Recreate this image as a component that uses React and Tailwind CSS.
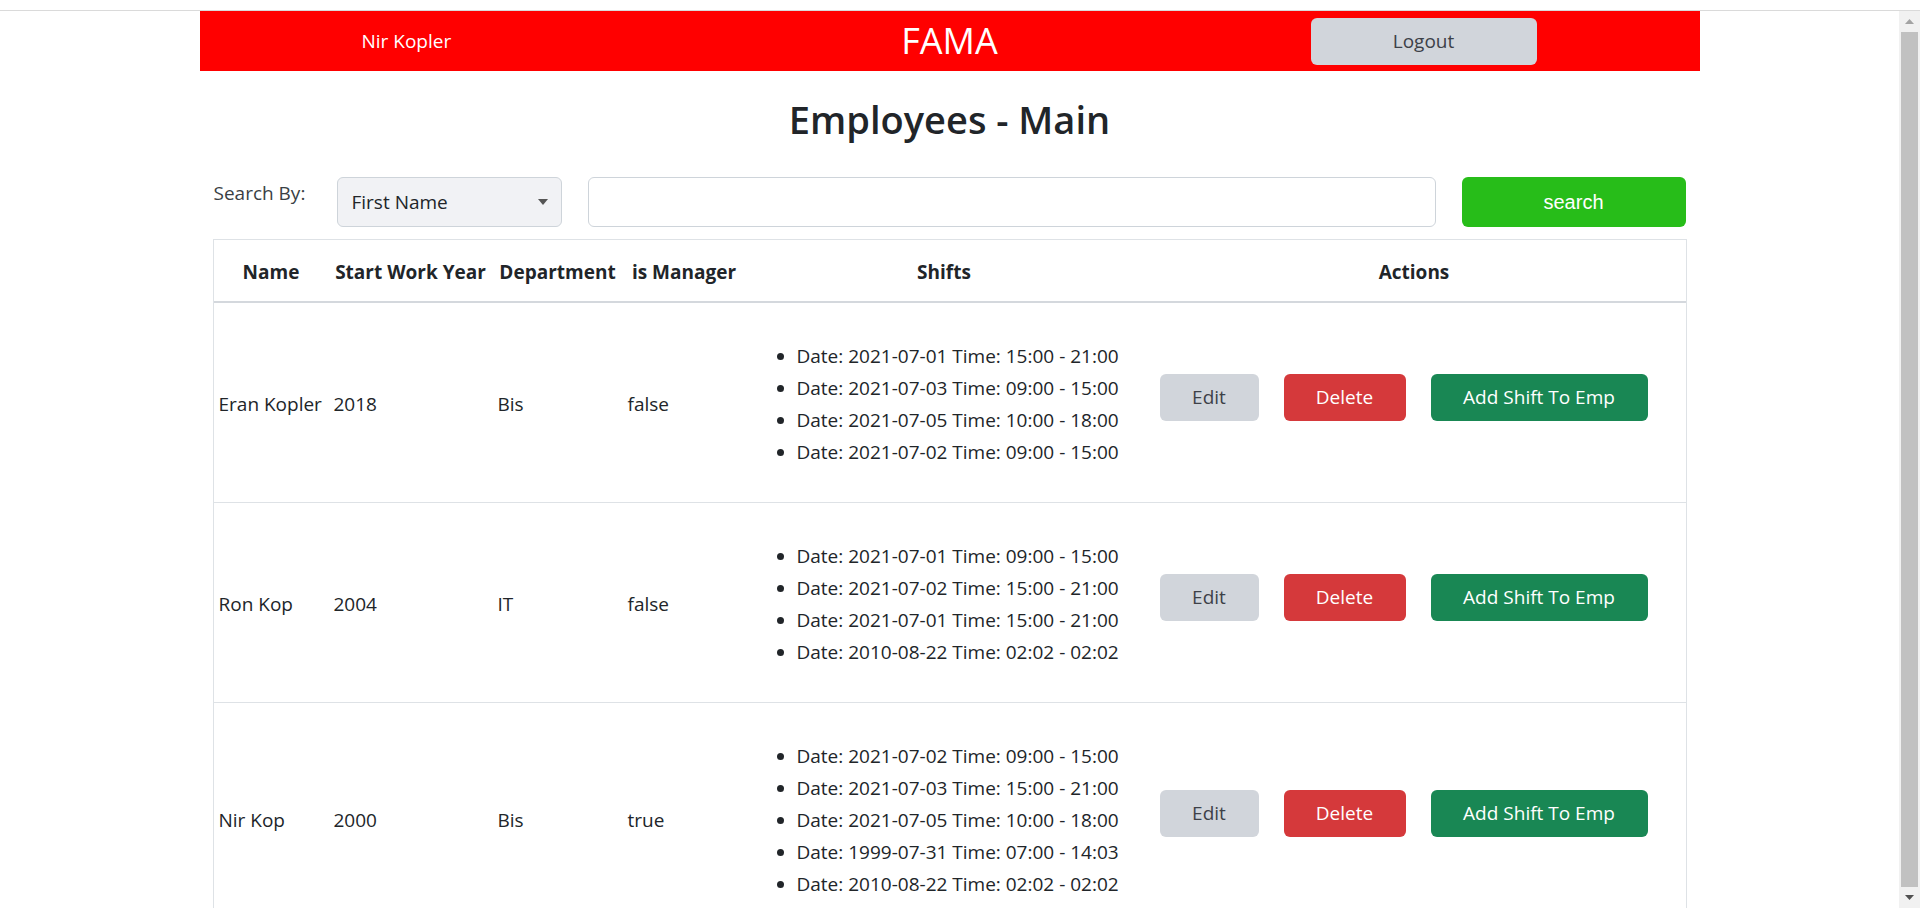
const employees = [
  {
    name: "Eran Kopler",
    year: 2018,
    dept: "Bis",
    manager: "false",
    shifts: [
      ["2021-07-01", "15:00", "21:00"],
      ["2021-07-03", "09:00", "15:00"],
      ["2021-07-05", "10:00", "18:00"],
      ["2021-07-02", "09:00", "15:00"],
    ],
  },
  {
    name: "Ron Kop",
    year: 2004,
    dept: "IT",
    manager: "false",
    shifts: [
      ["2021-07-01", "09:00", "15:00"],
      ["2021-07-02", "15:00", "21:00"],
      ["2021-07-01", "15:00", "21:00"],
      ["2010-08-22", "02:02", "02:02"],
    ],
  },
  {
    name: "Nir Kop",
    year: 2000,
    dept: "Bis",
    manager: "true",
    shifts: [
      ["2021-07-02", "09:00", "15:00"],
      ["2021-07-03", "15:00", "21:00"],
      ["2021-07-05", "10:00", "18:00"],
      ["1999-07-31", "07:00", "14:03"],
      ["2010-08-22", "02:02", "02:02"],
    ],
  },
];

const cols = "grid grid-cols-[115px_164px_130px_123px_397px_543px]";

function Header() {
  return (
    <div className="grid grid-cols-3 h-[60px] bg-[#ff0000] items-center text-white">
      <div className="pl-[162px] text-[19px]">Nir Kopler</div>
      <div className="text-center text-[36px] leading-none">FAMA</div>
      <div className="pl-[111px]">
        <button className="w-[226px] h-[47px] rounded-[6px] bg-[#d1d5db] text-[#3d4148] text-[19px]">
          Logout
        </button>
      </div>
    </div>
  );
}

function SearchBar() {
  return (
    <div className="flex items-start mt-[34px]">
      <div className="w-[124px] pl-[1px] leading-[32px] text-[19px] text-[#3a3f45]">Search By:</div>
      <div className="w-[225px] h-[50px] rounded-[6px] border border-[#ced4da] bg-[#f1f2f5] flex items-center justify-between pl-[14px] pr-[13px]">
        <span className="text-[19px] text-[#212529] pt-[1px]">First Name</span>
        <svg width="10" height="6" viewBox="0 0 10 6">
          <path d="M0 0h10L5 6z" fill="#555" />
        </svg>
      </div>
      <div className="ml-[26px] w-[848px] h-[50px] rounded-[6px] border border-[#ced4da] bg-white" />
      <button
        className="ml-[26px] w-[224px] h-[50px] rounded-[6px] bg-[#27bd19] text-white text-[20px]"
        style={{ fontFamily: '"Liberation Sans", Arial, sans-serif' }}
      >
        search
      </button>
    </div>
  );
}

function EmployeeRow({ emp }) {
  return (
    <div className={`${cols} border-b border-[#dee2e6] text-[19px] text-[#212529]`}>
      <div className="flex items-center pl-[5px] pt-[4px]">{emp.name}</div>
      <div className="flex items-center pl-[5px] pt-[4px]">{emp.year}</div>
      <div className="flex items-center pl-[5px] pt-[4px]">{emp.dept}</div>
      <div className="flex items-center pl-[5px] pt-[4px]">{emp.manager}</div>
      <ul className="list-disc pl-[51px] pt-[37px] pb-[34px]">
        {emp.shifts.map((s, i) => (
          <li key={i} className="leading-[32px] whitespace-nowrap">
            Date: {s[0]} Time: {s[1]} - {s[2]}
          </li>
        ))}
      </ul>
      <div className="flex items-center gap-[25px] pl-[17px] pb-[10px]">
        <button className="w-[99px] h-[47px] rounded-[6px] bg-[#d1d5db] text-[#3d4148]">Edit</button>
        <button className="w-[122px] h-[47px] rounded-[6px] bg-[#d5393b] text-white">Delete</button>
        <button className="w-[217px] h-[47px] rounded-[6px] bg-[#198754] text-white">Add Shift To Emp</button>
      </div>
    </div>
  );
}

function EmployeesTable() {
  return (
    <div className="mt-[12px] border border-[#dee2e6]">
      <div className={`${cols} h-[63px] pt-[4px] border-b-2 border-[#d4d8dd] items-center text-center font-bold text-[19px] text-[#212529]`}>
        <div>Name</div>
        <div>Start Work Year</div>
        <div>Department</div>
        <div>is Manager</div>
        <div>Shifts</div>
        <div>Actions</div>
      </div>
      {employees.map((emp) => (
        <EmployeeRow key={emp.name} emp={emp} />
      ))}
    </div>
  );
}

function Scrollbar() {
  return (
    <div className="w-[21px] shrink-0 bg-[#f1f1f1] flex flex-col items-center">
      <div className="h-[21px] flex items-center justify-center">
        <svg width="9" height="5" viewBox="0 0 9 5">
          <path d="M0 5L4.5 0 9 5z" fill="#a3a3a3" />
        </svg>
      </div>
      <div className="w-[17px] flex-1 bg-[#c1c1c1]" />
      <div className="h-[21px] flex items-center justify-center">
        <svg width="9" height="5" viewBox="0 0 9 5">
          <path d="M0 0h9L4.5 5z" fill="#505050" />
        </svg>
      </div>
    </div>
  );
}

export default function App() {
  return (
    <div
      className="h-screen flex flex-col overflow-hidden bg-white"
      style={{ fontFamily: '"Open Sans", "Noto Sans", sans-serif' }}
    >
      <div className="h-[11px] shrink-0 border-b border-[#dadada] bg-white" />
      <div className="flex flex-1 min-h-0">
        <div className="flex-1 overflow-hidden">
          <div className="w-[1500px] mx-auto">
            <Header />
            <h2 className="mt-[24px] text-center text-[38px] font-semibold leading-[48px] text-[#212529]">
              Employees - Main
            </h2>
            <div className="px-[13px]">
              <SearchBar />
              <EmployeesTable />
            </div>
          </div>
        </div>
        <Scrollbar />
      </div>
    </div>
  );
}
